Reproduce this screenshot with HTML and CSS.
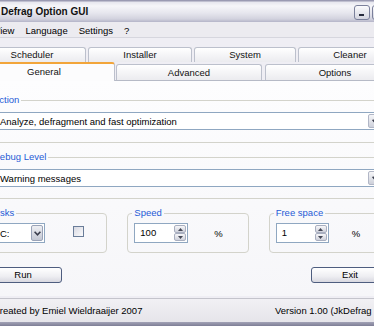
FILE: index.html
```html
<!DOCTYPE html>
<html>
<head>
<meta charset="utf-8">
<title>Defrag Option GUI</title>
<link rel="stylesheet" href="styles.css">
</head>
<body>
<div class="window">
  <div class="titlebar">
    <span class="title">Defrag Option GUI</span>
    <div class="caption">
      <span class="cbtn"><span class="dash"></span></span>
      <span class="cbtn"></span>
      <span class="cbtn"></span>
    </div>
  </div>
  <div class="menubar">
    <span>View</span><span>Language</span><span>Settings</span><span>?</span>
  </div>
  <div class="tabarea">
    <div class="tabrow row1">
      <div class="tab w108">Scheduler</div>
      <div class="tab w104">Installer</div>
      <div class="tab w102">System</div>
      <div class="tab w104">Cleaner</div>
    </div>
    <div class="tabrow row2">
      <div class="tab active t-general">General</div>
      <div class="tab t-advanced">Advanced</div>
      <div class="tab t-options">Options</div>
    </div>
    <div class="pane">
      <fieldset class="group">
        <legend>Action</legend>
        <div class="gbody">
          <div class="combo">
            <span class="combo-text">Analyze, defragment and fast optimization</span>
            <span class="dd"><svg width="7" height="5" viewBox="0 0 7 5"><path d="M0.6 0.8 L3.5 3.8 L6.4 0.8" fill="none" stroke="#3a3d4c" stroke-width="1.6"/></svg></span>
          </div>
        </div>
      </fieldset>
      <fieldset class="group debug">
        <legend>Debug Level</legend>
        <div class="gbody">
          <div class="combo">
            <span class="combo-text">Warning messages</span>
            <span class="dd"><svg width="7" height="5" viewBox="0 0 7 5"><path d="M0.6 0.8 L3.5 3.8 L6.4 0.8" fill="none" stroke="#3a3d4c" stroke-width="1.6"/></svg></span>
          </div>
        </div>
      </fieldset>
      <div class="bottom-row">
        <fieldset class="group">
          <legend class="lg-disks">Disks</legend>
          <div class="bbody disks">
            <div class="combo small">
              <span class="combo-text">C:</span>
              <span class="dd"><svg width="7" height="5" viewBox="0 0 7 5"><path d="M0.6 0.8 L3.5 3.8 L6.4 0.8" fill="none" stroke="#3a3d4c" stroke-width="1.6"/></svg></span>
            </div>
            <span class="chk"></span>
          </div>
        </fieldset>
        <fieldset class="group">
          <legend>Speed</legend>
          <div class="bbody">
            <div class="spin w54">
              <span class="spin-text">100</span>
              <span class="spinbtns">
                <span class="sb"><svg width="5" height="3" viewBox="0 0 5 3"><path d="M0 3 L2.5 0 L5 3Z" fill="#444857"/></svg></span>
                <span class="sb"><svg width="5" height="3" viewBox="0 0 5 3"><path d="M0 0 L2.5 3 L5 0Z" fill="#444857"/></svg></span>
              </span>
            </div>
            <span class="pct">%</span>
          </div>
        </fieldset>
        <fieldset class="group">
          <legend>Free space</legend>
          <div class="bbody">
            <div class="spin w53">
              <span class="spin-text">1</span>
              <span class="spinbtns">
                <span class="sb"><svg width="5" height="3" viewBox="0 0 5 3"><path d="M0 3 L2.5 0 L5 3Z" fill="#444857"/></svg></span>
                <span class="sb"><svg width="5" height="3" viewBox="0 0 5 3"><path d="M0 0 L2.5 3 L5 0Z" fill="#444857"/></svg></span>
              </span>
            </div>
            <span class="pct pct2">%</span>
          </div>
        </fieldset>
      </div>
      <div class="btnrow">
        <span class="btn">Run</span>
        <span class="btn">Exit</span>
      </div>
    </div>
  </div>
  <div class="statusbar">
    <span class="st1">Created by Emiel Wieldraaijer 2007</span>
    <span class="st2">Version 1.00 (JkDefrag</span>
  </div>
  <div class="framebottom"></div>
</div>
</body>
</html>
```
FILE: styles.css
```css
html, body {
  margin: 0;
  padding: 0;
}
body {
  width: 374px;
  height: 326px;
  overflow: hidden;
  background: #efeef3;
  font-family: "Liberation Sans", Arial, sans-serif;
  font-size: 9.5px;
  color: #000;
}
.window {
  margin-left: -28px;
  width: 440px;
}
.titlebar {
  height: 22px;
  box-sizing: border-box;
  display: flex;
  justify-content: space-between;
  align-items: flex-start;
  padding: 0 6px 0 29px;
  background: linear-gradient(to bottom, #9a9ab2 0px, #9a9ab2 1px, #e6e6ee 2px, #f6f6f9 6px, #e6e6ee 13px, #d2d2de 19px, #b4b4c8 22px);
}
.title {
  font-weight: bold;
  font-size: 10px;
  line-height: 24px;
  color: #111;
}
.caption {
  display: flex;
  gap: 2px;
  padding-top: 5px;
}
.cbtn {
  width: 16px;
  height: 15px;
  box-sizing: border-box;
  border: 1px solid #7b809b;
  border-radius: 3px;
  background: linear-gradient(#fbfbfd, #d3d4df);
  display: flex;
  align-items: flex-end;
  justify-content: center;
  padding-bottom: 3px;
}
.dash {
  width: 5px;
  height: 2px;
  background: #262a3c;
  margin-left: -2px;
}
.menubar {
  height: 16px;
  box-sizing: border-box;
  padding: 3px 0 0 22px;
  line-height: 12px;
  border-bottom: 1px solid #d6d6de;
  background: #ecebf0;
  display: flex;
  gap: 11px;
}
.tabarea {
  padding-top: 9px;
  padding-bottom: 2px;
  background: #efeef4;
}
.tabrow {
  display: flex;
}
.row1 {
  height: 15px;
  margin-left: 6px;
  gap: 2px;
}
.tab {
  box-sizing: border-box;
  border: 1px solid #bcc0cc;
  border-bottom: none;
  border-radius: 3px 3px 0 0;
  background: linear-gradient(#ffffff, #ebebef);
  text-align: center;
  color: #111;
}
.row1 .tab {
  height: 15px;
  line-height: 14px;
}
.w108 { width: 108px; }
.w104 { width: 104px; }
.w102 { width: 102px; }
.row2 {
  height: 18px;
  margin-left: 1px;
  align-items: flex-end;
}
.row2 .tab {
  height: 16px;
  line-height: 15px;
}
.row2 .tab.active {
  height: 19px;
  margin-bottom: -1px;
  background: #fcfcfd;
  border-top: 2px solid #f2a53a;
  position: relative;
  z-index: 1;
}
.t-general { width: 142px; }
.t-advanced { width: 146px; margin-left: 1px; }
.t-options { width: 140px; margin-left: 3px; }
.pane {
  height: 216px;
  box-sizing: border-box;
  border-top: 1px solid #b6bac6;
  background: linear-gradient(#fdfdfe, #f6f6f9);
  padding: 13px 22px 0 14px;
}
.group {
  margin: 0;
  padding: 0;
  border: 1px solid #d3d3cb;
  border-radius: 4px;
  min-width: 0;
}
.group legend {
  padding: 0 2px;
  margin-left: 4px;
  line-height: 12px;
  color: #1f5bd6;
}
.group legend.lg-disks {
  margin-left: 2px;
}
.gbody {
  padding: 6px 4px 12px 10px;
}
.debug {
  margin-top: 8px;
}
.debug .gbody {
  padding-bottom: 11px;
}
.combo {
  height: 18px;
  box-sizing: border-box;
  border: 1px solid #8fa7c1;
  background: #fff;
  display: flex;
  align-items: center;
}
.combo-text {
  flex: 1;
  padding-left: 2px;
  white-space: nowrap;
  overflow: hidden;
}
.dd {
  width: 15px;
  align-self: stretch;
  margin: 1px;
  box-sizing: border-box;
  border: 1px solid #b1b6c6;
  border-radius: 2px;
  background: linear-gradient(#f6f6f8, #cdd0da);
  display: flex;
  align-items: center;
  justify-content: center;
}
.bottom-row {
  display: flex;
  gap: 20px;
  margin-top: 8px;
}
.bottom-row .group {
  flex: 1;
}
.bbody {
  display: flex;
  align-items: center;
  height: 20px;
  padding: 4px 4px 9px 6px;
}
.bbody.disks {
  padding-left: 10px;
}
.combo.small {
  width: 48px;
  height: 20px;
}
.combo.small .dd {
  width: 12px;
  border-color: #9aa3b8;
  background: linear-gradient(#eeeff3, #c3c7d3);
}
.chk {
  width: 11px;
  height: 11px;
  box-sizing: border-box;
  border: 1px solid #6a7d99;
  background: linear-gradient(135deg, #d8d9e2, #fbfbfc);
  margin-left: 28px;
  margin-bottom: 3px;
}
.spin {
  height: 20px;
  box-sizing: border-box;
  border: 1px solid #8fa7c1;
  background: #fff;
  display: flex;
}
.w54 { width: 54px; }
.w53 { width: 53px; }
.spin-text {
  flex: 1;
  padding-left: 5px;
  line-height: 18px;
}
.spinbtns {
  width: 12px;
  margin: 1px;
  display: flex;
  flex-direction: column;
}
.sb {
  flex: 1;
  box-sizing: border-box;
  border: 1px solid #a9afc0;
  border-radius: 2px;
  background: linear-gradient(#f7f7f9, #cfd1db);
  display: flex;
  align-items: center;
  justify-content: center;
}
.pct {
  margin-left: 26px;
}
.pct.pct2 {
  margin-left: 23px;
}
.btnrow {
  display: flex;
  justify-content: space-between;
  margin: 14px 1px 0 -2px;
}
.btn {
  width: 78px;
  height: 16px;
  box-sizing: border-box;
  border: 1px solid #4e5d7f;
  border-radius: 3px;
  background: linear-gradient(#ffffff, #eeeef2 60%, #d8d8e0);
  text-align: center;
  line-height: 14px;
}
.statusbar {
  height: 24px;
  box-sizing: border-box;
  border-top: 1px solid #c4c4cc;
  background: linear-gradient(#f1f0f4, #e6e5ea);
  display: flex;
  line-height: 23px;
  padding-left: 21px;
  white-space: nowrap;
}
.st1 {
  width: 282px;
}
.framebottom {
  height: 4px;
  background: linear-gradient(#a2a2b6, #7e7e96);
}
```
